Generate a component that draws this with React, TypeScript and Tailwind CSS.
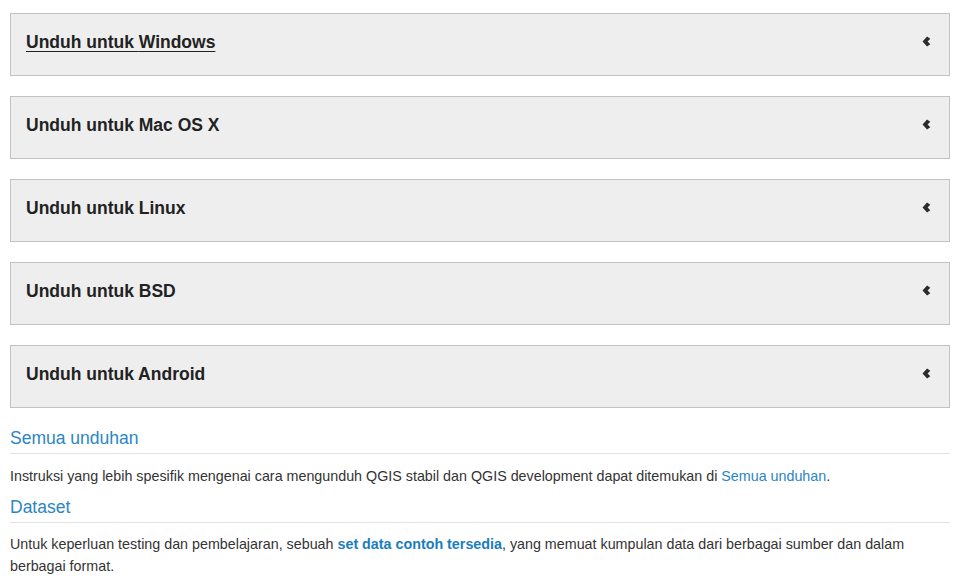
const PLATFORMS = ["Windows", "Mac OS X", "Linux", "BSD", "Android"];

function Chevron() {
  return (
    <svg viewBox="0 0 10 12" className="h-[11px] w-[9px] text-[#2b2b2b]" fill="currentColor">
      <path d="M5.6 0.4 L9.2 2.9 L6.2 6 L9.2 9.1 L5.6 11.6 L0.6 6 Z" />
    </svg>
  );
}

function Panel({ label, first }: { label: string; first?: boolean }) {
  return (
    <div className="flex h-[63px] items-center justify-between border border-[#c2c2c2] bg-[#eeeeee] pl-[15px] pr-[18px] pb-[6px]">
      <h4 className={`text-[17.5px] font-bold leading-5 text-[#222222] ${first ? "underline underline-offset-[3px]" : ""}`}>
        Unduh untuk {label}
      </h4>
      <Chevron />
    </div>
  );
}

export default function App() {
  return (
    <div className="bg-white px-[10px] pt-[13px] font-['Liberation_Sans',Arial,sans-serif]">
      <div className="flex flex-col gap-[20px]">
        {PLATFORMS.map((p, i) => (
          <Panel key={p} label={p} first={i === 0} />
        ))}
      </div>

      <h3 className="mt-[19px] border-b border-[#e3e3e3] pb-[3px] text-[17.5px] leading-[23px] text-[#2a86c5]">
        Semua unduhan
      </h3>
      <p className="mt-[11px] text-[14.3px] leading-[22px] text-[#333333]">
        Instruksi yang lebih spesifik mengenai cara mengunduh QGIS stabil dan QGIS development dapat ditemukan di{" "}
        <a className="text-[#2a86c5]">Semua unduhan</a>.
      </p>

      <h3 className="mt-[9px] border-b border-[#e3e3e3] pb-[3px] text-[17.5px] leading-[23px] text-[#2a86c5]">
        Dataset
      </h3>
      <p className="mt-[10px] text-[14.3px] leading-[22px] text-[#333333]">
        Untuk keperluan testing dan pembelajaran, sebuah{" "}
        <a className="font-bold text-[#1a7dbc]">set data contoh tersedia</a>, yang memuat kumpulan data dari berbagai
        sumber dan dalam berbagai format.
      </p>
    </div>
  );
}
